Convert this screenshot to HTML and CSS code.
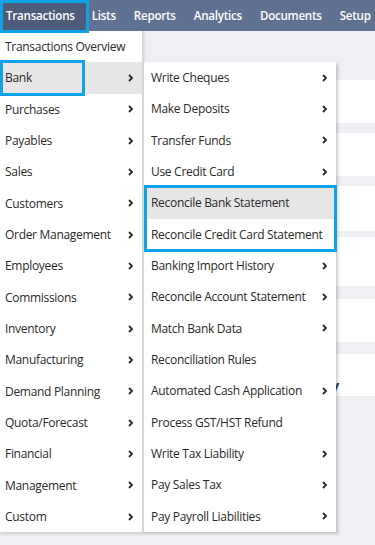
FILE: index.html
```html
<html><head>
<meta name="viewport" content="width=device-width, initial-scale=1">
<link rel="stylesheet" href="styles.css"></head><body>

<div class="navbar">
  <a class="navItem active">Transactions</a>
  <a class="navItem">Lists</a>
  <a class="navItem">Reports</a>
  <a class="navItem">Analytics</a>
  <a class="navItem">Documents</a>
  <a class="navItem">Setup</a>
</div>

<div class="page">
  <div class="card c1"></div>
  <div class="card c2"></div>
  <div class="card c3"></div>
  <div class="card c4"></div>
  <div class="card c5"></div>
  <div class="card c6"><span class="cardTitle">Recent Activity</span></div>

  <div class="menu">
    <div class="menuRow">Transactions Overview</div>
    <div class="menuRow hover picked">Bank <svg class="chev" viewBox="0 0 6 8"><path d="M1 1l3 3-3 3"/></svg></div>
    <div class="menuRow">Purchases <svg class="chev" viewBox="0 0 6 8"><path d="M1 1l3 3-3 3"/></svg></div>
    <div class="menuRow">Payables <svg class="chev" viewBox="0 0 6 8"><path d="M1 1l3 3-3 3"/></svg></div>
    <div class="menuRow">Sales <svg class="chev" viewBox="0 0 6 8"><path d="M1 1l3 3-3 3"/></svg></div>
    <div class="menuRow">Customers <svg class="chev" viewBox="0 0 6 8"><path d="M1 1l3 3-3 3"/></svg></div>
    <div class="menuRow">Order Management <svg class="chev" viewBox="0 0 6 8"><path d="M1 1l3 3-3 3"/></svg></div>
    <div class="menuRow">Employees <svg class="chev" viewBox="0 0 6 8"><path d="M1 1l3 3-3 3"/></svg></div>
    <div class="menuRow">Commissions <svg class="chev" viewBox="0 0 6 8"><path d="M1 1l3 3-3 3"/></svg></div>
    <div class="menuRow">Inventory <svg class="chev" viewBox="0 0 6 8"><path d="M1 1l3 3-3 3"/></svg></div>
    <div class="menuRow">Manufacturing <svg class="chev" viewBox="0 0 6 8"><path d="M1 1l3 3-3 3"/></svg></div>
    <div class="menuRow">Demand Planning <svg class="chev" viewBox="0 0 6 8"><path d="M1 1l3 3-3 3"/></svg></div>
    <div class="menuRow">Quota/Forecast <svg class="chev" viewBox="0 0 6 8"><path d="M1 1l3 3-3 3"/></svg></div>
    <div class="menuRow">Financial <svg class="chev" viewBox="0 0 6 8"><path d="M1 1l3 3-3 3"/></svg></div>
    <div class="menuRow">Management <svg class="chev" viewBox="0 0 6 8"><path d="M1 1l3 3-3 3"/></svg></div>
    <div class="menuRow">Custom <svg class="chev" viewBox="0 0 6 8"><path d="M1 1l3 3-3 3"/></svg></div>
  </div>

  <div class="submenu">
    <div class="menuRow">Write Cheques <svg class="chev" viewBox="0 0 6 8"><path d="M1 1l3 3-3 3"/></svg></div>
    <div class="menuRow">Make Deposits <svg class="chev" viewBox="0 0 6 8"><path d="M1 1l3 3-3 3"/></svg></div>
    <div class="menuRow">Transfer Funds <svg class="chev" viewBox="0 0 6 8"><path d="M1 1l3 3-3 3"/></svg></div>
    <div class="menuRow">Use Credit Card <svg class="chev" viewBox="0 0 6 8"><path d="M1 1l3 3-3 3"/></svg></div>
    <div class="group">
      <div class="menuRow hover">Reconcile Bank Statement</div>
      <div class="menuRow">Reconcile Credit Card Statement</div>
    </div>
    <div class="menuRow">Banking Import History <svg class="chev" viewBox="0 0 6 8"><path d="M1 1l3 3-3 3"/></svg></div>
    <div class="menuRow">Reconcile Account Statement <svg class="chev" viewBox="0 0 6 8"><path d="M1 1l3 3-3 3"/></svg></div>
    <div class="menuRow">Match Bank Data <svg class="chev" viewBox="0 0 6 8"><path d="M1 1l3 3-3 3"/></svg></div>
    <div class="menuRow">Reconciliation Rules</div>
    <div class="menuRow">Automated Cash Application <svg class="chev" viewBox="0 0 6 8"><path d="M1 1l3 3-3 3"/></svg></div>
    <div class="menuRow">Process GST/HST Refund</div>
    <div class="menuRow">Write Tax Liability <svg class="chev" viewBox="0 0 6 8"><path d="M1 1l3 3-3 3"/></svg></div>
    <div class="menuRow">Pay Sales Tax <svg class="chev" viewBox="0 0 6 8"><path d="M1 1l3 3-3 3"/></svg></div>
    <div class="menuRow">Pay Payroll Liabilities <svg class="chev" viewBox="0 0 6 8"><path d="M1 1l3 3-3 3"/></svg></div>
  </div>
</div>

</body></html>
```

FILE: styles.css
```css
body {
  margin: 0;
  font-family: "Open Sans", Arial, sans-serif;
  font-size: 12px;
  color: #2a2a2a;
  background-color: #eef0f3;
  overflow: hidden;
}

.navbar {
  display: flex;
  height: 31px;
  background-color: #607294;
  position: relative;
  z-index: 3;
}
.navItem {
  display: flex;
  align-items: center;
  margin-right: 18px;
  color: white;
  font-weight: 600;
  font-size: 11.6px;
  letter-spacing: -0.25px;
  white-space: nowrap;
}
.navItem.active {
  position: relative;
  background-color: #4d5c7b;
  padding: 0 11px 0 6px;
  margin-right: 6px;
}
.navItem.active:before {
  content: "";
  position: absolute;
  top: 0;
  left: 0;
  right: -3px;
  bottom: -2px;
  border: 3px solid #0ea2e6;
}

.page {
  position: relative;
  height: 514px;
  padding-top: 49px;
  padding-left: 150px;
  box-sizing: border-box;
}
.card {background-color: white; height: 43px; margin-bottom: 10px;}
.c3 {height: 45px; margin-bottom: 6px;}
.c4 {height: 49px; margin-bottom: 13px;}
.c5 {height: 43px; margin-bottom: 12px;}
.c6 {height: 42px; display: flex; align-items: center; padding-left: 132px;}
.cardTitle {font-size: 15px; font-weight: 700; color: #2f3c58;}

.menu {
  position: absolute;
  top: 0;
  left: 0;
  width: 142px;
  background-color: white;
  border-right: 2px solid #dadada;
  box-shadow: 0 2px 3px rgba(0,0,0,0.15);
  z-index: 1;
}
.submenu {
  position: absolute;
  top: 31px;
  left: 142px;
  width: 192px;
  background-color: white;
  border-left: 2px solid #d6d6d6;
  box-shadow: 2px 2px 3px rgba(0,0,0,0.2);
  z-index: 2;
}

.menuRow {
  display: flex;
  align-items: center;
  justify-content: space-between;
  height: 31.33px;
  padding: 0 8px 0 5px;
  white-space: nowrap;
  font-weight: 500;
  letter-spacing: -0.3px;
}
.submenu .menuRow {padding: 0 8px 0 7px;}
.menuRow.hover {background-color: #e6e6e6;}
.menuRow.picked {position: relative;}
.menuRow.picked:before {
  content: "";
  position: absolute;
  top: -2px;
  bottom: -2px;
  left: 0;
  width: 79px;
  border: 3px solid #0ea2e6;
}

.group {position: relative;}
.group:after {
  content: "";
  position: absolute;
  top: -2px;
  bottom: -2px;
  left: 0;
  right: -1px;
  border: 3px solid #0ea2e6;
}

.chev {
  width: 6px;
  height: 8px;
  fill: none;
  stroke: #2b2b2b;
  stroke-width: 1.8;
}
```
